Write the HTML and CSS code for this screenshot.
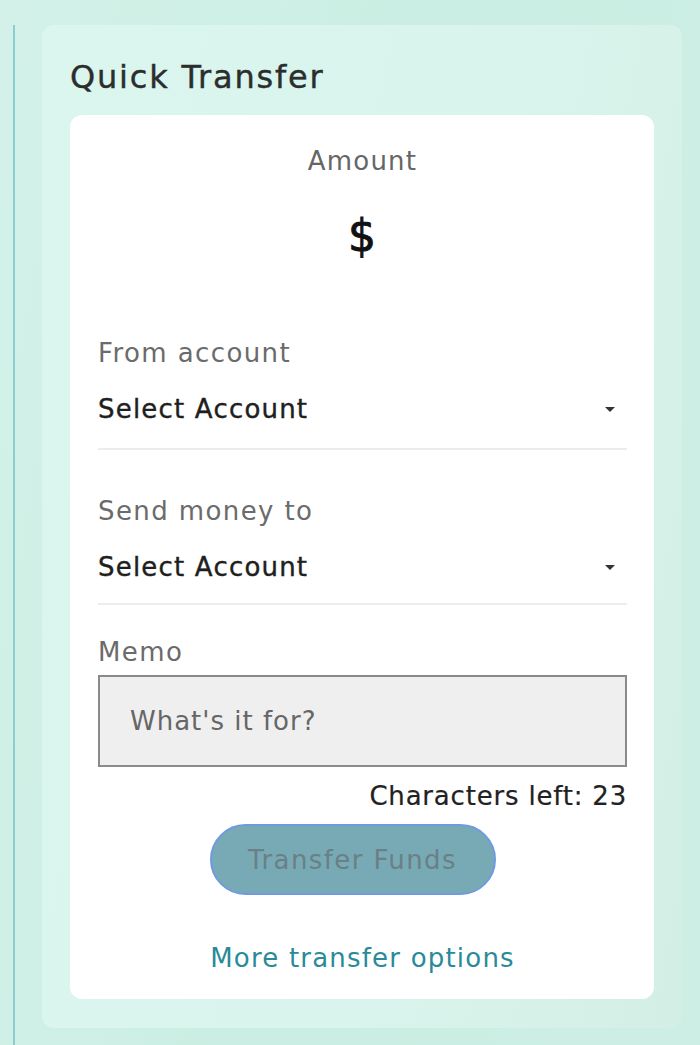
FILE: index.html
```html
<!DOCTYPE html>
<html lang="en">
<head>
<meta charset="UTF-8" />
<meta name="viewport" content="width=device-width, initial-scale=1" />
<title>Quick Transfer</title>
<link rel="stylesheet" href="styles.css">
</head>
<body>
<div class="page">
  <div class="rail"></div>
  <section class="panel">
    <h2 class="panel-title">Quick Transfer</h2>
    <div class="card">
      <div class="amount">
        <div class="amount-label">Amount</div>
        <div class="amount-value">$</div>
      </div>

      <div class="field">
        <div class="field-label">From account</div>
        <div class="select">
          <span>Select Account</span>
          <span class="caret"></span>
        </div>
      </div>

      <div class="field">
        <div class="field-label">Send money to</div>
        <div class="select">
          <span>Select Account</span>
          <span class="caret"></span>
        </div>
      </div>

      <div class="memo">
        <div class="field-label">Memo</div>
        <div class="memo-input">What's it for?</div>
        <div class="chars-left">Characters left: 23</div>
      </div>

      <button class="transfer-btn" disabled>Transfer Funds</button>
      <a class="more-link" href="#">More transfer options</a>
    </div>
  </section>
</div>
</body>
</html>
```

FILE: styles.css
```css
html, body {
  margin: 0;
  height: 100%;
}
body {
  font-family: "DejaVu Sans", "Liberation Sans", sans-serif;
  letter-spacing: 1.2px;
  background: linear-gradient(100deg, #d3f1e8 0%, #caeee3 50%, #cdeee4 100%);
  color: #222;
}
.page {
  display: flex;
  padding-top: 25px;
  min-height: 1020px;
}
.rail {
  width: 2px;
  margin-left: 13px;
  background: #8ccdd0;
}
.panel {
  width: 584px;
  margin-left: 27px;
  align-self: flex-start;
  padding: 30px 28px 29px;
  border-radius: 12px;
  background: linear-gradient(100deg, #dbf6ef 0%, #d8f4ec 60%, #d3efe5 100%);
}
.panel-title {
  margin: 0 0 16px;
  font-size: 32px;
  font-weight: normal;
  letter-spacing: 1.8px;
  line-height: 44px;
  color: #2b2e2d;
  -webkit-text-stroke: 0.4px #2b2e2d;
}
.card {
  background: #fff;
  border-radius: 12px;
  padding: 29px 27px 23px 28px;
  display: flex;
  flex-direction: column;
}
.amount {
  text-align: center;
  margin-bottom: 78px;
}
.amount-label {
  font-size: 26px;
  line-height: 34px;
  color: #666;
}
.amount-value {
  margin-top: 36px;
  font-size: 44px;
  line-height: 44px;
  color: #111;
  -webkit-text-stroke: 1px #111;
}
.field {
  border-bottom: 2px solid #ececec;
  padding-bottom: 22px;
  margin-bottom: 44px;
}
.field + .field {
  padding-bottom: 19px;
  margin-bottom: 30px;
}
.field-label {
  font-size: 26px;
  line-height: 34px;
  letter-spacing: 1.4px;
  color: #6b6b6b;
}
.select {
  display: flex;
  justify-content: space-between;
  align-items: center;
  margin-top: 22px;
  font-size: 26px;
  line-height: 34px;
  color: #1f1f1f;
  -webkit-text-stroke: 0.4px #1f1f1f;
}
.caret {
  width: 0;
  height: 0;
  margin-right: 12px;
  border-left: 5px solid transparent;
  border-right: 5px solid transparent;
  border-top: 5px solid #333;
}
.memo .field-label {
  margin-bottom: 6px;
}
.memo-input {
  height: 92px;
  box-sizing: border-box;
  border: 2px solid #8a8a8a;
  background: #efefef;
  padding: 0 30px;
  display: flex;
  align-items: center;
  font-size: 26px;
  letter-spacing: 1px;
  color: #666;
}
.chars-left {
  text-align: right;
  margin-top: 12px;
  font-size: 26px;
  line-height: 34px;
  letter-spacing: 0.8px;
  color: #222;
  -webkit-text-stroke: 0.2px #222;
}
.transfer-btn {
  align-self: center;
  margin: 11px 20px 0 0;
  width: 286px;
  height: 71px;
  border-radius: 36px;
  border: 2px solid #6f9ae0;
  background: #78aab5;
  font-family: inherit;
  font-size: 26px;
  letter-spacing: 1.4px;
  color: #6a7f86;
}
.more-link {
  align-self: center;
  margin-top: 45px;
  font-size: 26px;
  line-height: 36px;
  color: #2a8a99;
  text-decoration: none;
}
```
